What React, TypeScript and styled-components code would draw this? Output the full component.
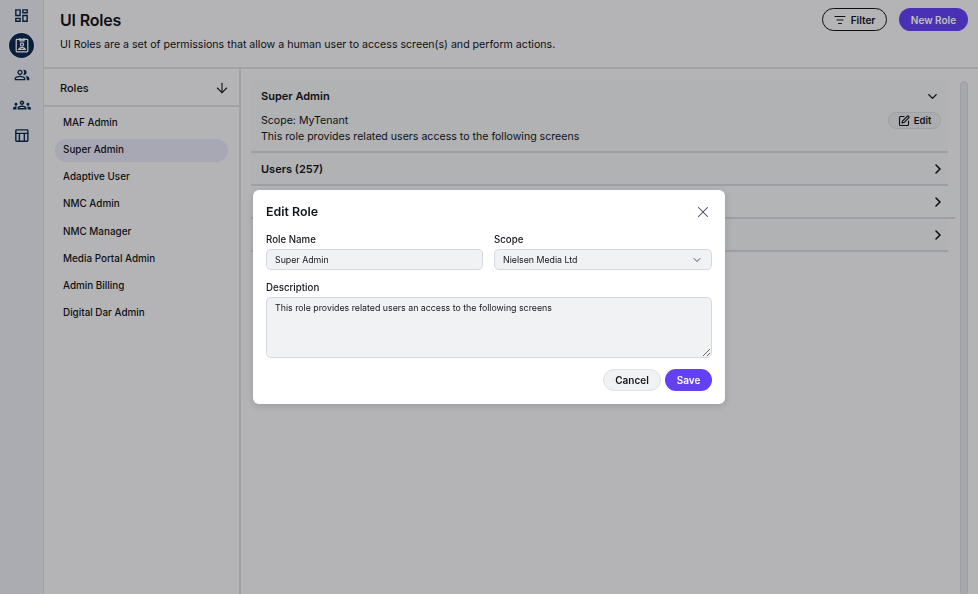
import React from 'react';
import styled, { createGlobalStyle } from 'styled-components';
import {
  MdOutlineDashboard,
  MdOutlinePeopleAlt,
  MdOutlineGroups,
  MdOutlineTableChart,
} from 'react-icons/md';
import { ArrowDown, ChevronDown, ChevronRight, ListFilter, SquarePen, X } from 'lucide-react';

const GlobalStyle = createGlobalStyle`
  html, body {
    margin: 0;
    height: 100%;
    overflow: hidden;
    font-family: Inter, "Liberation Sans", sans-serif;
    background: #f0f1f3;
  }
  * {
    box-sizing: border-box;
  }
`;

const Page = styled.div`
  display: flex;
  width: 978px;
  height: 594px;
  color: #14161c;
`;

const Rail = styled.nav`
  display: flex;
  flex-direction: column;
  align-items: center;
  width: 44px;
  flex-shrink: 0;
  background: #e4e6ec;
  border-right: 1px solid #d6d8dd;
`;

const RailItem = styled.div`
  display: flex;
  align-items: center;
  justify-content: center;
  height: 30px;
  color: #0e2a4f;
`;

const ActiveDot = styled.div`
  display: flex;
  align-items: center;
  justify-content: center;
  width: 25px;
  height: 25px;
  border-radius: 50%;
  color: #fff;
  background: #0e2a4f;
  box-shadow: 0 0 0 1px #f0f1f3;
`;

const Main = styled.main`
  display: flex;
  flex-direction: column;
  flex: 1;
  min-width: 0;
`;

const Header = styled.header`
  display: flex;
  justify-content: space-between;
  height: 69px;
  padding: 9px 22px 0 16px;
  border-bottom: 2px solid #d6d8dd;
`;

const Title = styled.h1`
  margin: 0 0 6px;
  font-size: 16px;
  line-height: 22px;
  font-weight: 600;
  letter-spacing: -0.2px;
`;

const Subtitle = styled.p`
  margin: 0;
  font-size: 10.62px;
  line-height: 16px;
`;

const Actions = styled.div`
  display: flex;
  gap: 12px;
  height: 23px;
  margin-top: -1px;
  margin-right: -12px;
`;

const FilterButton = styled.button`
  display: flex;
  align-items: center;
  justify-content: center;
  gap: 5px;
  width: 65px;
  border: 1px solid #14161c;
  border-radius: 12px;
  background: transparent;
  color: #14161c;
  font: 600 10px Inter, sans-serif;
`;

const PrimaryButton = styled.button`
  width: 69px;
  border: 0;
  border-radius: 12px;
  background: #6341f0;
  color: #fff;
  font: 600 10px Inter, sans-serif;
`;

const Body = styled.div`
  display: flex;
  flex: 1;
  min-height: 0;
`;

const RolesPanel = styled.aside`
  width: 197px;
  flex-shrink: 0;
  border-right: 2px solid #d6d8dd;
`;

const RolesHeader = styled.div`
  display: flex;
  align-items: center;
  justify-content: space-between;
  height: 38px;
  padding: 1px 9px 0 16px;
  border-bottom: 2px solid #d6d8dd;
  font-size: 11px;
  font-weight: 500;
`;

const RoleList = styled.ul`
  list-style: none;
  margin: 0;
  padding: 5px 11px 0;
`;

const RoleItem = styled.li<{ $selected?: boolean }>`
  height: 23px;
  margin-bottom: 4.15px;
  padding-left: 8px;
  border-radius: 12px;
  font-size: 9.9px;
  font-weight: 500;
  line-height: 21px;
  background: ${(p) => (p.$selected ? '#e0e0f0' : 'transparent')};
`;

const Content = styled.section`
  display: flex;
  flex: 1;
  min-width: 0;
  padding: 12px 10px 0 10px;
  gap: 12px;
`;

const Accordion = styled.div`
  flex: 1;
  min-width: 0;
`;

const RoleCard = styled.div`
  height: 72px;
  padding: 0 10px;
  background: #eceef1;
  border-bottom: 2px solid #d3d5db;
`;

const CardTop = styled.div`
  display: flex;
  align-items: center;
  justify-content: space-between;
  height: 30px;
  margin-right: -2px;
  font-size: 11px;
  font-weight: 600;
`;

const CardBody = styled.div`
  display: flex;
  justify-content: space-between;
  padding-top: 2px;
  font-size: 10.6px;
  line-height: 16px;
`;

const EditChip = styled.button`
  display: flex;
  align-items: center;
  justify-content: center;
  gap: 4px;
  width: 53px;
  height: 17px;
  margin-top: -1px;
  margin-right: -3px;
  border: 1px solid #d3d5db;
  border-radius: 9px;
  background: #e4e6ea;
  color: #14161c;
  font: 600 9.5px Inter, sans-serif;
`;

const Row = styled.div<{ $wide?: boolean }>`
  display: flex;
  align-items: center;
  justify-content: space-between;
  height: 33px;
  padding: 0 ${(p) => (p.$wide ? '9px' : '2px')} 0 10px;
  margin-right: ${(p) => (p.$wide ? '-7px' : '0')};
  background: ${(p) => (p.$wide ? '#eff0f2' : '#eceef1')};
  border-bottom: 2px solid #d3d5db;
  font-size: 11px;
  font-weight: 600;
`;

const Scrollbar = styled.div`
  width: 8px;
  margin-bottom: -2px;
  border: 1px solid #d3d5db;
  border-radius: 4px;
  background: #dfe1e6;
`;

const Overlay = styled.div`
  position: fixed;
  inset: 0;
  background: rgba(0, 0, 0, 0.25);
`;

const Modal = styled.div`
  position: fixed;
  left: 253px;
  top: 190px;
  width: 472px;
  height: 214px;
  padding: 13px 13px 0;
  background: #fff;
  border-radius: 6px;
  box-shadow: 0 2px 8px rgba(0, 0, 0, 0.15);
`;

const ModalHead = styled.div`
  display: flex;
  align-items: center;
  justify-content: space-between;
  height: 17px;
  margin-bottom: 13px;
  font-size: 12.4px;
  font-weight: 600;
  color: #14161c;
`;

const FieldRow = styled.div`
  display: grid;
  grid-template-columns: 217px 218px;
  gap: 11px;
  margin-bottom: 11px;
`;

const Label = styled.label`
  display: block;
  margin-bottom: 2px;
  font-size: 9.7px;
  line-height: 14px;
  font-weight: 500;
  color: #14161c;
`;

const Input = styled.input`
  display: block;
  width: 100%;
  height: 21px;
  padding: 0 8px;
  background: #f1f2f4;
  border: 1px solid #d5d8e0;
  border-radius: 5px;
  color: #14161c;
  font: 400 8.8px Inter, sans-serif;
  outline: none;
`;

const SelectBox = styled.div`
  display: flex;
  align-items: center;
  justify-content: space-between;
  height: 21px;
  padding: 0 8px;
  background: #f1f2f4;
  border: 1px solid #d5d8e0;
  border-radius: 5px;
  color: #14161c;
  font-size: 8.8px;
`;

const TextArea = styled.textarea`
  display: block;
  width: 446px;
  height: 61px;
  padding: 3px 8px;
  background: #f1f2f4;
  border: 1px solid #d5d8e0;
  border-radius: 5px;
  color: #14161c;
  font: 400 8.8px/13px Inter, sans-serif;
  outline: none;
`;

const ModalFooter = styled.div`
  display: flex;
  justify-content: flex-end;
  gap: 4px;
  margin-top: 11px;
`;

const CancelButton = styled.button`
  width: 58px;
  height: 22px;
  border: 1px solid #dfe1e6;
  border-radius: 11px;
  background: #f1f2f4;
  color: #14161c;
  font: 600 10px Inter, sans-serif;
`;

const SaveButton = styled.button`
  width: 47px;
  height: 22px;
  border: 0;
  border-radius: 11px;
  background: #6341f0;
  color: #fff;
  font: 600 10px Inter, sans-serif;
`;

const roles = [
  'MAF Admin',
  'Super Admin',
  'Adaptive User',
  'NMC Admin',
  'NMC Manager',
  'Media Portal Admin',
  'Admin Billing',
  'Digital Dar Admin',
];

const BadgeIcon = () => (
  <svg width="16" height="16" viewBox="0 0 16 16" fill="none" stroke="currentColor" strokeWidth="1.2">
    <rect x="2.2" y="2.4" width="11.6" height="12.4" rx="0.8" />
    <path d="M6 1v2.8h4V1" />
    <circle cx="8" cy="7.4" r="1.6" />
    <path d="M4.6 12.4c.5-1.5 1.8-2.1 3.4-2.1s2.9.6 3.4 2.1z" />
  </svg>
);

const App: React.FC = () => (
  <>
    <GlobalStyle />
    <Page>
      <Rail>
        <RailItem><MdOutlineDashboard size={17} /></RailItem>
        <RailItem><ActiveDot><BadgeIcon /></ActiveDot></RailItem>
        <RailItem><MdOutlinePeopleAlt size={16} /></RailItem>
        <RailItem><MdOutlineGroups size={18} /></RailItem>
        <RailItem><MdOutlineTableChart size={17} /></RailItem>
      </Rail>
      <Main>
        <Header>
          <div>
            <Title>UI Roles</Title>
            <Subtitle>UI Roles are a set of permissions that allow a human user to access screen(s) and perform actions.</Subtitle>
          </div>
          <Actions>
            <FilterButton><ListFilter size={12} />Filter</FilterButton>
            <PrimaryButton>New Role</PrimaryButton>
          </Actions>
        </Header>
        <Body>
          <RolesPanel>
            <RolesHeader>Roles<ArrowDown size={16} strokeWidth={1.6} /></RolesHeader>
            <RoleList>
              {roles.map((role) => (
                <RoleItem key={role} $selected={role === 'Super Admin'}>{role}</RoleItem>
              ))}
            </RoleList>
          </RolesPanel>
          <Content>
            <Accordion>
              <RoleCard>
                <CardTop>Super Admin<ChevronDown size={15} strokeWidth={2.2} /></CardTop>
                <CardBody>
                  <div>
                    Scope: MyTenant
                    <br />
                    This role provides related users access to the following screens
                  </div>
                  <EditChip><SquarePen size={12} strokeWidth={2.3} />Edit</EditChip>
                </CardBody>
              </RoleCard>
              <Row>Users (257)<ChevronRight size={16} strokeWidth={2.4} /></Row>
              <Row $wide><span /><ChevronRight size={16} strokeWidth={2.4} /></Row>
              <Row><span /><ChevronRight size={16} strokeWidth={2.4} /></Row>
            </Accordion>
            <Scrollbar />
          </Content>
        </Body>
      </Main>
    </Page>
    <Overlay />
    <Modal>
      <ModalHead>Edit Role<X size={18} strokeWidth={1.4} color="#3c4560" /></ModalHead>
      <FieldRow>
        <div>
          <Label>Role Name</Label>
          <Input readOnly value="Super Admin" />
        </div>
        <div>
          <Label>Scope</Label>
          <SelectBox>Nielsen Media Ltd<ChevronDown size={12} color="#4a5066" /></SelectBox>
        </div>
      </FieldRow>
      <Label>Description</Label>
      <TextArea readOnly value="This role provides related users an access to the following screens" />
      <ModalFooter>
        <CancelButton>Cancel</CancelButton>
        <SaveButton>Save</SaveButton>
      </ModalFooter>
    </Modal>
  </>
);

export default App;
